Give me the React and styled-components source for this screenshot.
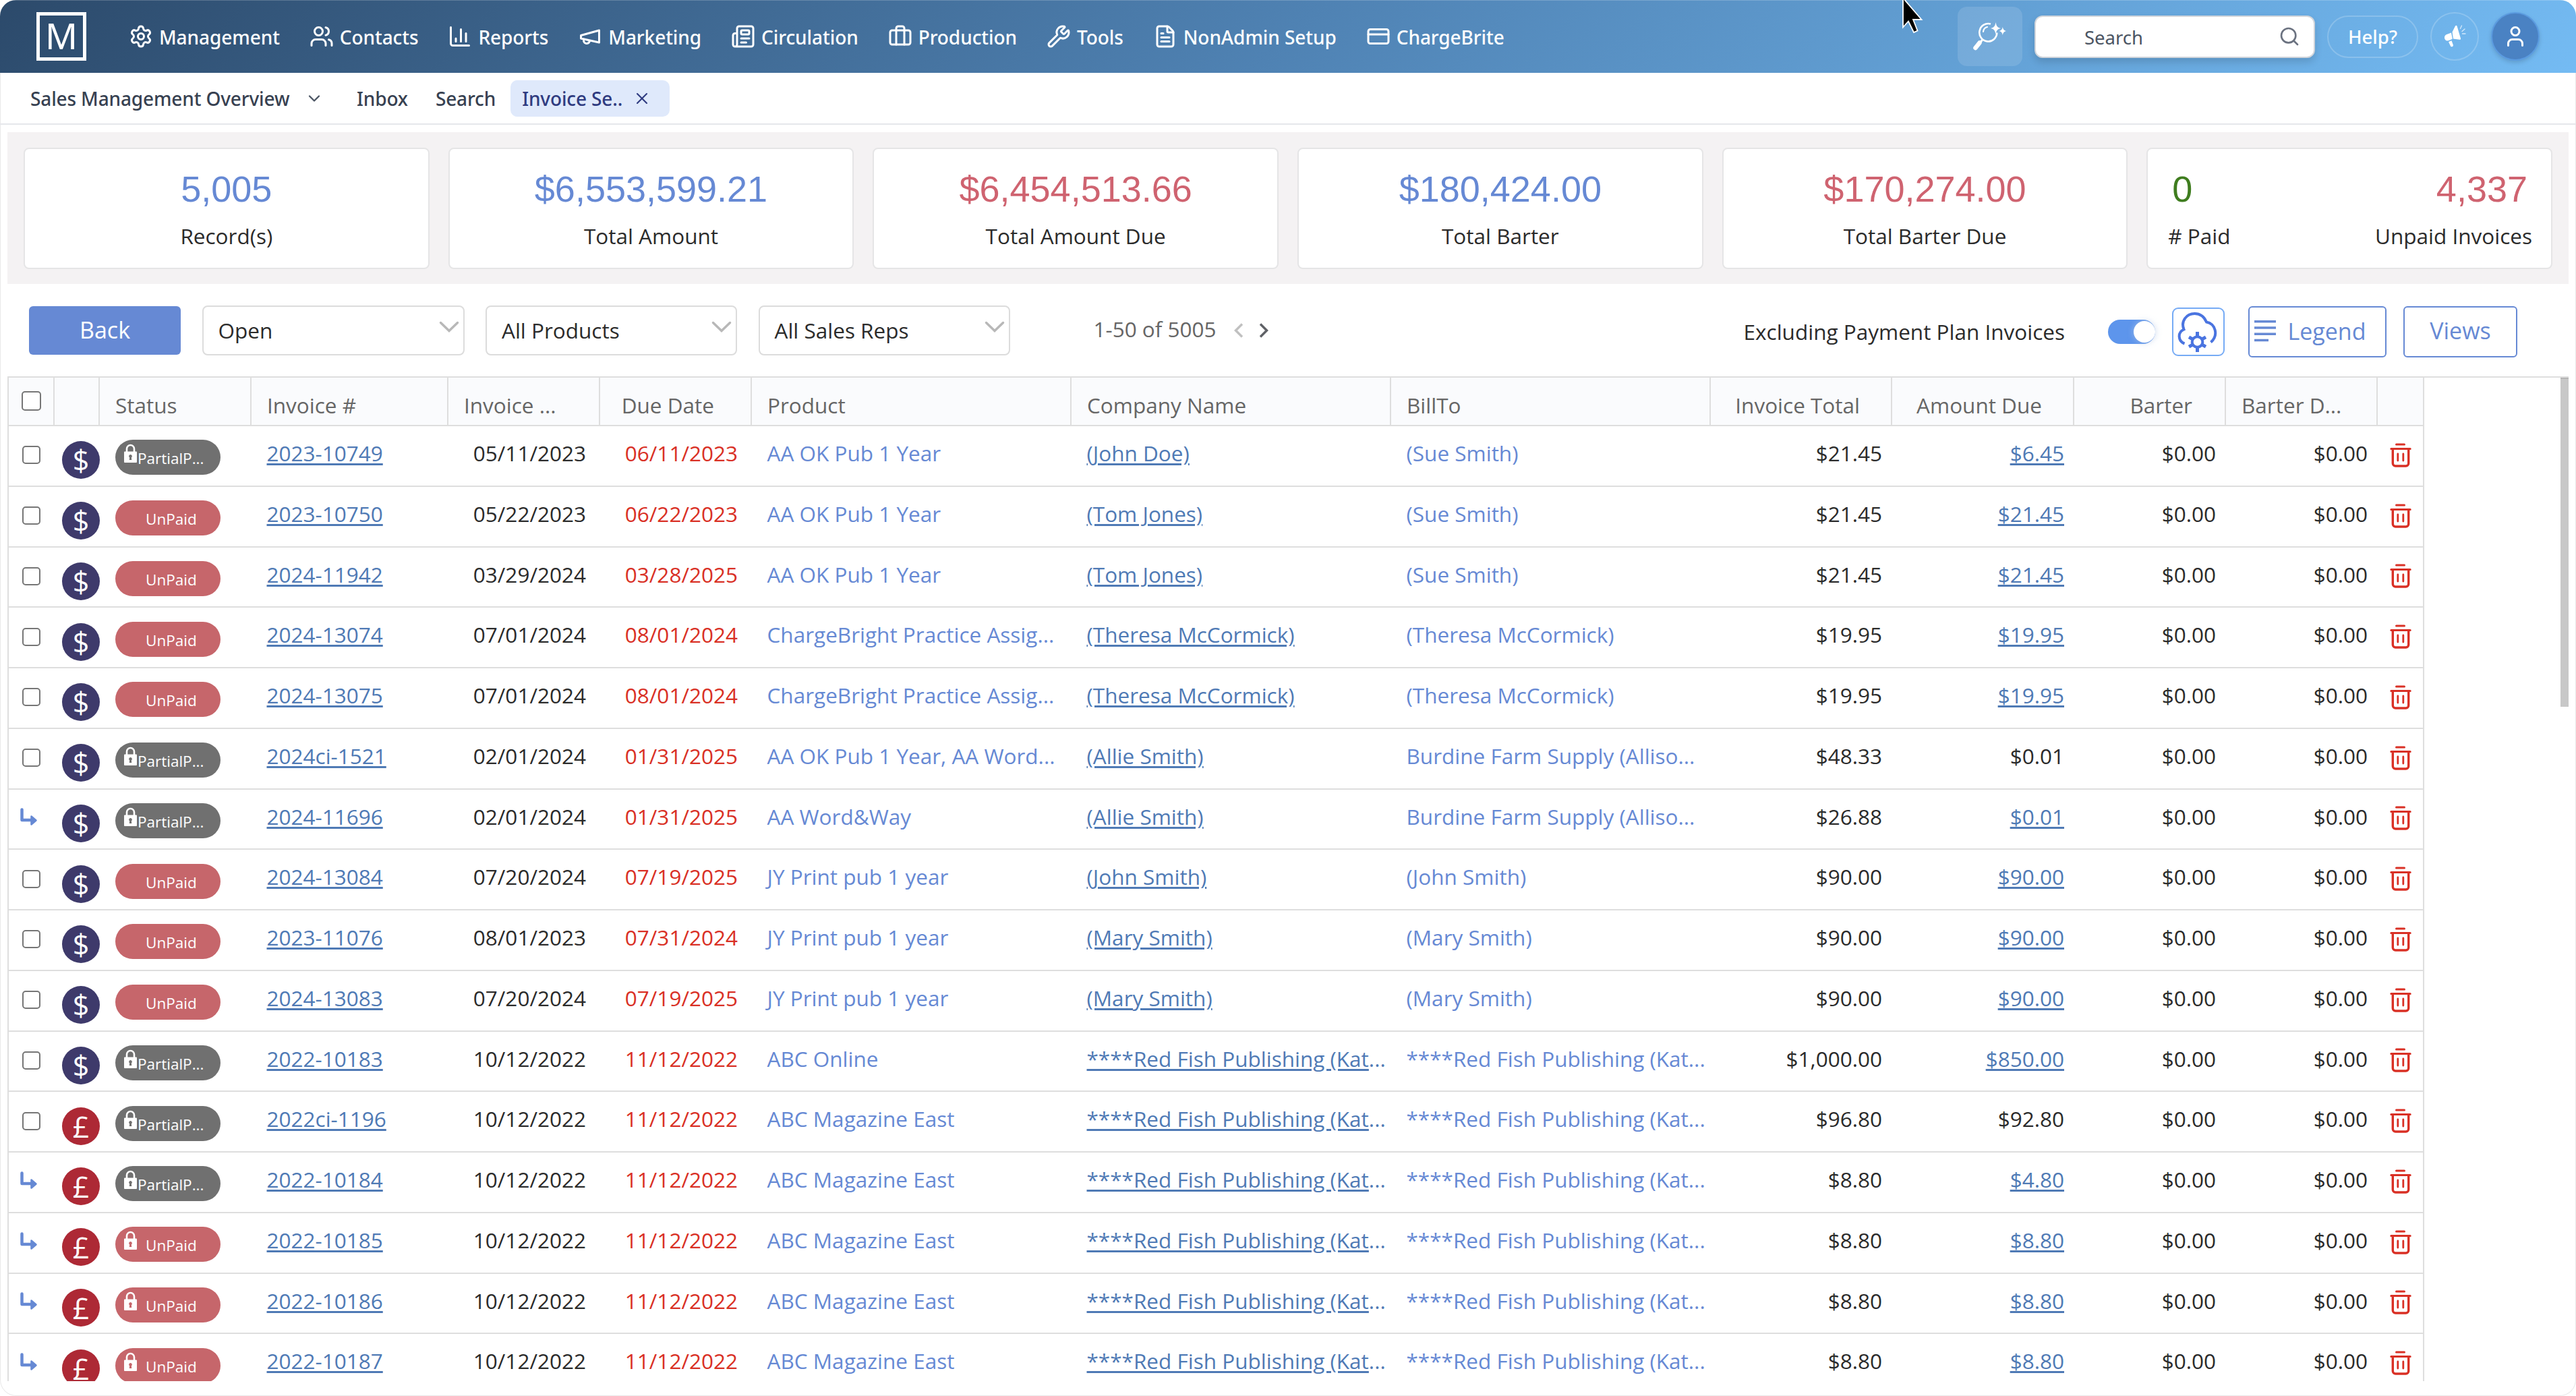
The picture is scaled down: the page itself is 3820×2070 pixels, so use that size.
import React from 'react';
import styled, { createGlobalStyle } from 'styled-components';
import {
  Settings,
  Users,
  ChartColumn,
  Newspaper,
  Briefcase,
  Wrench,
  FileText,
  CreditCard,
  Search,
  User,
  ChevronDown,
  X,
} from 'lucide-react';

const BLUE = '#6689d4';
const RED = '#cf6370';

const MegaphoneIcon = () => (
  <svg width="36" height="36" viewBox="0 0 24 24" fill="none" stroke="currentColor" strokeWidth="2" strokeLinecap="round" strokeLinejoin="round">
    <path d="m3 11 18-5v12L3 14v-3z" />
    <path d="M11.6 16.8a3 3 0 1 1-5.8-1.6" />
  </svg>
);

const navItems = [
  { label: 'Management', icon: <Settings size={36} /> },
  { label: 'Contacts', icon: <Users size={36} /> },
  { label: 'Reports', icon: <ChartColumn size={36} /> },
  { label: 'Marketing', icon: <MegaphoneIcon /> },
  { label: 'Circulation', icon: <Newspaper size={36} /> },
  { label: 'Production', icon: <Briefcase size={36} /> },
  { label: 'Tools', icon: <Wrench size={36} /> },
  { label: 'NonAdmin Setup', icon: <FileText size={36} /> },
  { label: 'ChargeBrite', icon: <CreditCard size={36} /> },
];

const totals = [
  { value: '5,005', label: 'Record(s)', color: BLUE },
  { value: '$6,553,599.21', label: 'Total Amount', color: BLUE },
  { value: '$6,454,513.66', label: 'Total Amount Due', color: RED },
  { value: '$180,424.00', label: 'Total Barter', color: BLUE },
  { value: '$170,274.00', label: 'Total Barter Due', color: RED },
];

const RED_FISH = '****Red Fish Publishing (Kat...';

const invoices = [
  { cur: '$', status: 'PartialP...', lock: true, no: '2023-10749', date: '05/11/2023', due: '06/11/2023', product: 'AA OK Pub 1 Year', company: '(John Doe)', billTo: '(Sue Smith)', total: '$21.45', amount: '$6.45' },
  { cur: '$', status: 'UnPaid', no: '2023-10750', date: '05/22/2023', due: '06/22/2023', product: 'AA OK Pub 1 Year', company: '(Tom Jones)', billTo: '(Sue Smith)', total: '$21.45', amount: '$21.45' },
  { cur: '$', status: 'UnPaid', no: '2024-11942', date: '03/29/2024', due: '03/28/2025', product: 'AA OK Pub 1 Year', company: '(Tom Jones)', billTo: '(Sue Smith)', total: '$21.45', amount: '$21.45' },
  { cur: '$', status: 'UnPaid', no: '2024-13074', date: '07/01/2024', due: '08/01/2024', product: 'ChargeBright Practice Assig...', company: '(Theresa McCormick)', billTo: '(Theresa McCormick)', total: '$19.95', amount: '$19.95' },
  { cur: '$', status: 'UnPaid', no: '2024-13075', date: '07/01/2024', due: '08/01/2024', product: 'ChargeBright Practice Assig...', company: '(Theresa McCormick)', billTo: '(Theresa McCormick)', total: '$19.95', amount: '$19.95' },
  { cur: '$', status: 'PartialP...', lock: true, no: '2024ci-1521', date: '02/01/2024', due: '01/31/2025', product: 'AA OK Pub 1 Year, AA Word...', company: '(Allie Smith)', billTo: 'Burdine Farm Supply (Alliso...', total: '$48.33', amount: '$0.01', combined: true },
  { child: true, cur: '$', status: 'PartialP...', lock: true, no: '2024-11696', date: '02/01/2024', due: '01/31/2025', product: 'AA Word&Way', company: '(Allie Smith)', billTo: 'Burdine Farm Supply (Alliso...', total: '$26.88', amount: '$0.01' },
  { cur: '$', status: 'UnPaid', no: '2024-13084', date: '07/20/2024', due: '07/19/2025', product: 'JY Print pub 1 year', company: '(John Smith)', billTo: '(John Smith)', total: '$90.00', amount: '$90.00' },
  { cur: '$', status: 'UnPaid', no: '2023-11076', date: '08/01/2023', due: '07/31/2024', product: 'JY Print pub 1 year', company: '(Mary Smith)', billTo: '(Mary Smith)', total: '$90.00', amount: '$90.00' },
  { cur: '$', status: 'UnPaid', no: '2024-13083', date: '07/20/2024', due: '07/19/2025', product: 'JY Print pub 1 year', company: '(Mary Smith)', billTo: '(Mary Smith)', total: '$90.00', amount: '$90.00' },
  { cur: '$', status: 'PartialP...', lock: true, no: '2022-10183', date: '10/12/2022', due: '11/12/2022', product: 'ABC Online', company: RED_FISH, billTo: RED_FISH, total: '$1,000.00', amount: '$850.00' },
  { cur: '£', status: 'PartialP...', lock: true, no: '2022ci-1196', date: '10/12/2022', due: '11/12/2022', product: 'ABC Magazine East', company: RED_FISH, billTo: RED_FISH, total: '$96.80', amount: '$92.80', combined: true },
  { child: true, cur: '£', status: 'PartialP...', lock: true, no: '2022-10184', date: '10/12/2022', due: '11/12/2022', product: 'ABC Magazine East', company: RED_FISH, billTo: RED_FISH, total: '$8.80', amount: '$4.80' },
  { child: true, cur: '£', status: 'UnPaid', lock: true, no: '2022-10185', date: '10/12/2022', due: '11/12/2022', product: 'ABC Magazine East', company: RED_FISH, billTo: RED_FISH, total: '$8.80', amount: '$8.80' },
  { child: true, cur: '£', status: 'UnPaid', lock: true, no: '2022-10186', date: '10/12/2022', due: '11/12/2022', product: 'ABC Magazine East', company: RED_FISH, billTo: RED_FISH, total: '$8.80', amount: '$8.80' },
  { child: true, cur: '£', status: 'UnPaid', lock: true, no: '2022-10187', date: '10/12/2022', due: '11/12/2022', product: 'ABC Magazine East', company: RED_FISH, billTo: RED_FISH, total: '$8.80', amount: '$8.80' },
];

const SparkSearchIcon = () => (
  <svg width="52" height="42" viewBox="0 0 52 42" fill="none" stroke="#fff">
    <path d="M27 2.6A13 13.200 0 1 0 36.300 15.500" strokeWidth="2.600" />
    <path d="M16 14a8 8 0 0 1 6-7" strokeWidth="2.2" strokeLinecap="round" />
    <path d="M15 25.500 12 29.500" strokeWidth="3" />
    <path d="M10.5 30.500 4.500 38" strokeWidth="6.500" strokeLinecap="round" />
    <path d="M34.500 0c1 5.800 2.700 8 7.500 9-4.800 1-6.500 3.200-7.500 9-1-5.800-2.700-8-7.500-9 4.800-1 6.500-3.200 7.500-9z" fill="#fff" stroke="none" />
    <path d="M44.800 7c.8 3.700 2 5.200 5.500 6-3.500.8-4.700 2.300-5.500 6-.8-3.700-2-5.200-5.500-6 3.500-.8 4.700-2.300 5.500-6z" fill="#fff" stroke="none" />
  </svg>
);

const BullhornIcon = () => (
  <svg width="34" height="34" viewBox="0 0 34 34" fill="#fff">
    <path d="M13.500 10.500 18 1.500c.8-1.300 2.200-.9 2.600.2L26 20c.3 1.200-.6 2-1.800 1.700L15 20.500z" />
    <path d="M12 11.500 13.800 20.700 8.500 23C5 24.300 2.500 22.500 2 19.500c-.4-3 1.300-4.900 4-5.800z" />
    <path d="m8 25 4.500-1.800 2.300 6.300c.4 1.600-.4 2.500-1.500 2.700-1.300.3-2.200-.4-2.600-1.500z" />
    <path d="M25.500 5.500 27.500 1M28 9.500l4-3.500M28.500 13H33" stroke="#d5e9fb" strokeWidth="1.300" strokeLinecap="round" />
  </svg>
);

const CloudGearIcon = () => (
  <svg width="60" height="60" viewBox="0 0 60 60" fill="none" stroke="#4a74e0" strokeWidth="4">
    <path d="M11.500 47.500C2 44 .5 31 10.500 26.500 5.500 14 14.500 3 26.500 3c8 0 14 4.500 17.500 12.500C57 17.500 62.500 35 50.500 45.500" />
    <circle cx="30.500" cy="45" r="7.800" />
    <path d="M30.500 38v-8M30.500 52v8M24.500 41.500l-6.500-3.700M36.500 48.500l6.500 3.700M24.500 48.500 18 52.200M36.500 41.500l6.500-3.700" strokeWidth="5" />
  </svg>
);

const TrashIcon = () => (
  <svg width="32" height="36" viewBox="0 0 32 36" fill="none" stroke="#d93025" strokeWidth="3" strokeLinecap="round">
    <path d="M9.500 2h12M1.800 8.500h28.400" />
    <path d="M4.300 9v21a4 4 0 0 0 4 4h15.400a4 4 0 0 0 4-4V9" strokeWidth="3.400" />
    <path d="M11.800 16v10M19.800 16v10" strokeWidth="2.800" />
  </svg>
);

const ChildArrow = () => (
  <svg width="26" height="27" viewBox="0 0 26 27" fill="none" stroke={BLUE} strokeWidth="4.500" strokeLinecap="round" strokeLinejoin="round">
    <path d="M2.500 2.500v15.500h18" />
    <path d="m16.500 12.500 7 6-7 6z" fill={BLUE} strokeWidth="2.500" />
  </svg>
);

const PadlockIcon = () => (
  <svg width="19" height="28" viewBox="0 0 19 28" fill="none">
    <path d="M4 13V7.500a5.500 5.500 0 0 1 11 0V13" stroke="#fff" strokeWidth="2.600" />
    <path fill="#fff" fillRule="evenodd" d="M1 11.500h17a1 1 0 0 1 1 1V27a1 1 0 0 1-1 1H1a1 1 0 0 1-1-1V12.500a1 1 0 0 1 1-1zM9.500 16a2.400 2.400 0 0 0-1.300 4.400L7.700 24h3.600l-.5-3.600A2.400 2.400 0 0 0 9.500 16z" />
  </svg>
);

const CompanyName = ({ name }) => {
  const cut = name.endsWith('...');
  return (
    <>
      <Link>{cut ? name.slice(0, -3) : name}</Link>
      {cut && <LinkDots>...</LinkDots>}
    </>
  );
};

const InvoiceRow = ({ item }) => (
  <Row>
    <Cell $center={!item.child} $pad={item.child ? '0 0 5px 17px' : undefined}>
      {item.child ? <ChildArrow /> : <CheckBox />}
    </Cell>
    <Cell $pad="0 0 0 11px">
      <Currency $pound={item.cur === '£'}>{item.cur}</Currency>
    </Cell>
    <Cell $pad="5px 0 0 23px">
      <Pill $unpaid={item.status === 'UnPaid'}>
        <LockSlot>{item.lock && <PadlockIcon />}</LockSlot>
        <PillText $unpaid={item.status === 'UnPaid'}>{item.status}</PillText>
      </Pill>
    </Cell>
    <TextCell>
      <Link>{item.no}</Link>
    </TextCell>
    <TextCell $right $end={21}>{item.date}</TextCell>
    <TextCell $right $end={21} $color="#d93025">{item.due}</TextCell>
    <TextCell $color={BLUE}>{item.product}</TextCell>
    <TextCell><CompanyName name={item.company} /></TextCell>
    <TextCell $color={BLUE}>{item.billTo}</TextCell>
    <TextCell $right $end={15}>{item.total}</TextCell>
    <TextCell $right $end={15}>{item.combined ? item.amount : <Link>{item.amount}</Link>}</TextCell>
    <TextCell $right $end={15}>$0.00</TextCell>
    <TextCell $right $end={15}>$0.00</TextCell>
    <Cell $pad="0 0 2px 18px">
      <TrashIcon />
    </Cell>
  </Row>
);

const App = () => (
  <>
    <GlobalStyle />
    <Window>
      <NavBar>
        <Logo>M</Logo>
        <NavList>
          {navItems.map(item => (
            <NavItem key={item.label}>
              {item.icon}
              <span>{item.label}</span>
            </NavItem>
          ))}
        </NavList>
        <NavTools>
          <SparkButton><SparkSearchIcon /></SparkButton>
          <SearchBox>
            <span>Search</span>
            <Search size={32} color="#6b7280" />
          </SearchBox>
          <HelpButton>Help?</HelpButton>
          <RoundButton><BullhornIcon /></RoundButton>
          <RoundButton $filled><User size={36} /></RoundButton>
        </NavTools>
      </NavBar>

      <TabBar>
        <OverviewTab>
          Sales Management Overview
          <ChevronDown size={28} color="#4b5563" />
        </OverviewTab>
        <Tab $gap={41}>Inbox</Tab>
        <Tab $gap={22}>Search</Tab>
        <ActiveTab>
          Invoice Se..
          <X size={28} strokeWidth={1.8} />
        </ActiveTab>
      </TabBar>

      <Summary>
        {totals.map(t => (
          <Card key={t.label}>
            <CardValue $color={t.color}>{t.value}</CardValue>
            <CardLabel>{t.label}</CardLabel>
          </Card>
        ))}
        <SplitCard>
          <div>
            <CardValue $color="#3f7d1f" $pad="0 0 0 6px">0</CardValue>
            <CardLabel># Paid</CardLabel>
          </div>
          <SplitEnd>
            <CardValue $color={RED} $pad="0 7px 0 0">4,337</CardValue>
            <CardLabel>Unpaid Invoices</CardLabel>
          </SplitEnd>
        </SplitCard>
      </Summary>

      <Toolbar>
        <BackButton>Back</BackButton>
        {[['Open', 389], ['All Products', 373], ['All Sales Reps', 373]].map(([text, width]) => (
          <Select key={text} $width={width}>
            {text}
            <svg width="30" height="18" viewBox="0 0 30 18" fill="none" stroke="#b8b8b8" strokeWidth="3.500" strokeLinecap="round">
              <path d="m2.500 2.500 12.500 12 12.500-12" />
            </svg>
          </Select>
        ))}
        <Pager>
          1-50 of 5005
          <svg width="52" height="22" viewBox="0 0 52 22" fill="none" strokeWidth="3.500">
            <path d="M13 1.500 3.500 11l9.500 9.500" stroke="#c0c0c0" />
            <path d="m40 1.500 9.500 9.500L40 20.500" stroke="#5f6166" />
          </svg>
        </Pager>
        <ToolbarEnd>
          <span>Excluding Payment Plan Invoices</span>
          <Toggle><Knob /></Toggle>
          <CloudButton><CloudGearIcon /></CloudButton>
          <OutlineButton $width={205} $pad="0 21px 2px 0">
            <svg width="32" height="32" viewBox="0 0 32 32" fill={BLUE}>
              <path d="M0 0h32v3.500H0zM0 9.300h32v3.500H0zM0 18.500h32V22H0zM0 27.700h21v3.500H0z" />
            </svg>
            Legend
          </OutlineButton>
          <OutlineButton $width={169} $pad="0 0 3px">Views</OutlineButton>
        </ToolbarEnd>
      </Toolbar>

      <GridArea>
        <Table>
          <HeadRow>
            <HeadCell $center><CheckBox $large /></HeadCell>
            <HeadCell />
            <HeadCell>Status</HeadCell>
            <HeadCell>Invoice #</HeadCell>
            <HeadCell>Invoice ...</HeadCell>
            <HeadCell $end={54}>Due Date</HeadCell>
            <HeadCell>Product</HeadCell>
            <HeadCell>Company Name</HeadCell>
            <HeadCell>BillTo</HeadCell>
            <HeadCell $end={46}>Invoice Total</HeadCell>
            <HeadCell $end={46}>Amount Due</HeadCell>
            <HeadCell $end={48}>Barter</HeadCell>
            <HeadCell>Barter D...</HeadCell>
            <HeadCell />
          </HeadRow>
          {invoices.map(item => (
            <InvoiceRow key={item.no} item={item} />
          ))}
        </Table>
        <ScrollThumb />
      </GridArea>

      <Cursor width="34" height="52" viewBox="0 0 34 52">
        <path d="M2-3v43.500l8-9 8 16.500 5.500-2.500-6.500-16.500H29.500z" fill="#000" stroke="#fff" strokeWidth="1.800" />
      </Cursor>
    </Window>
  </>
);

const GlobalStyle = createGlobalStyle`
  * {
    box-sizing: border-box;
  }
  body {
    margin: 0;
    background: #fff;
    font-family: 'Open Sans', 'Noto Sans', sans-serif;
    color: #2b2b2b;
    overflow: hidden;
  }
  svg {
    display: block;
    flex-shrink: 0;
  }
`;

const Window = styled.div`
  position: relative;
  display: flex;
  flex-direction: column;
  width: 3820px;
  height: 2070px;
  padding-bottom: 22px;
  border-radius: 24px;
  overflow: hidden;
  background: #fff;
  box-shadow: inset 0 0 0 1px #e9e9e9;
`;

const NavBar = styled.header`
  display: flex;
  align-items: center;
  flex-shrink: 0;
  height: 108px;
  padding: 0 54px;
  color: #fff;
  font-family: 'Noto Sans', sans-serif;
  background: linear-gradient(135deg, #2c4a6b 0%, #4f82b3 50%, #74bbf3 100%);
  box-shadow: inset 0 1px 0 rgba(255, 255, 255, 0.2);
`;
const Logo = styled.div`
  width: 74px;
  height: 72px;
  border: 5px solid #fff;
  font-size: 53px;
  line-height: 60px;
  text-align: center;
`;
const NavList = styled.nav`
  display: flex;
  align-items: center;
  gap: 44px;
  margin-left: 63px;
`;
const NavItem = styled.div`
  display: flex;
  align-items: center;
  gap: 9px;
  font-size: 28px;
  font-weight: 500;
  letter-spacing: -0.08px;
  white-space: nowrap;
  span {
    padding-top: 2px;
  }
`;
const NavTools = styled.div`
  display: flex;
  align-items: center;
  gap: 18px;
  margin-left: auto;
`;
const SparkButton = styled.div`
  display: flex;
  align-items: center;
  justify-content: center;
  width: 96px;
  height: 88px;
  border-radius: 14px;
  background: rgba(255, 255, 255, 0.12);
`;
const SearchBox = styled.div`
  display: flex;
  align-items: center;
  justify-content: space-between;
  width: 416px;
  height: 63px;
  padding: 0 20px 0 72px;
  border: 2px solid #d1d5db;
  border-radius: 12px;
  background: #fff;
  color: #4b5563;
  font-size: 27.5px;
  box-shadow: 0 6px 12px rgba(0, 0, 0, 0.14);
  span {
    padding-top: 3px;
  }
`;
const HelpButton = styled.div`
  width: 135px;
  height: 63px;
  border: 2px solid rgba(255, 255, 255, 0.2);
  border-radius: 32px;
  font-size: 27.5px;
  font-weight: 500;
  line-height: 59px;
  text-align: center;
`;
const RoundButton = styled.div`
  display: flex;
  align-items: center;
  justify-content: center;
  width: 72px;
  height: 72px;
  border: 2px solid ${({ $filled }) => ($filled ? '#5b9be0' : 'rgba(255, 255, 255, 0.2)')};
  border-radius: 50%;
  background: ${({ $filled }) => ($filled ? '#4a82c3' : 'transparent')};
  box-shadow: ${({ $filled }) => ($filled ? '0 3px 6px rgba(0, 0, 0, 0.15)' : 'none')};
`;

const TabBar = styled.div`
  display: flex;
  align-items: center;
  flex-shrink: 0;
  height: 77px;
  padding: 0 0 0 45px;
  border-bottom: 2px solid #e5e7eb;
  color: #374151;
  font-family: 'Noto Sans', sans-serif;
  font-size: 28px;
  font-weight: 500;
  letter-spacing: -0.14px;
  white-space: nowrap;
`;
const OverviewTab = styled.div`
  display: flex;
  align-items: center;
  justify-content: space-between;
  width: 435px;
`;
const Tab = styled.div`
  margin: 0 ${({ $gap }) => $gap}px 0 0;
  &:nth-child(2) {
    margin-left: 49px;
  }
`;
const ActiveTab = styled.div`
  display: flex;
  align-items: center;
  justify-content: space-between;
  width: 236px;
  height: 54px;
  padding: 0 27px 0 17px;
  border-radius: 10px;
  background: #dfe9fb;
  color: #2f3b80;
`;

const Summary = styled.section`
  display: grid;
  grid-template-columns: repeat(6, 1fr);
  gap: 28px;
  flex-shrink: 0;
  height: 225px;
  margin: 11px 11px 0;
  padding: 23px 24px 22px;
  background: #f4f2f3;
`;
const Card = styled.div`
  padding-top: 28px;
  border: 2px solid #e5e5e6;
  border-radius: 8px;
  background: #fff;
  text-align: center;
`;
const SplitCard = styled(Card)`
  display: flex;
  justify-content: space-between;
  padding-left: 30px;
  padding-right: 28px;
  text-align: left;
`;
const SplitEnd = styled.div`
  text-align: right;
`;
const CardValue = styled.div`
  padding: ${({ $pad }) => $pad || 0};
  font-family: 'Liberation Sans', Arial, sans-serif;
  font-size: 54px;
  line-height: 62px;
  color: ${({ $color }) => $color};
`;
const CardLabel = styled.div`
  margin-top: 17px;
  font-size: 31.5px;
  line-height: 44px;
`;

const Toolbar = styled.div`
  display: flex;
  align-items: center;
  flex-shrink: 0;
  height: 137px;
  padding-left: 43px;
  font-size: 32px;
  white-space: nowrap;
`;
const BackButton = styled.div`
  width: 225px;
  height: 72px;
  border-radius: 6px;
  background: ${BLUE};
  color: #fff;
  font-size: 34px;
  line-height: 70px;
  text-align: center;
`;
const Select = styled.div`
  display: flex;
  align-items: center;
  justify-content: space-between;
  width: ${({ $width }) => $width}px;
  height: 74px;
  margin-left: 31.5px;
  padding: 0 6px 0 22px;
  border: 2px solid #dcdcdc;
  border-radius: 8px;
  font-size: 31.5px;
  svg {
    margin-bottom: 9px;
  }
`;
const Pager = styled.div`
  display: flex;
  align-items: center;
  gap: 25px;
  margin-left: 124px;
  padding-bottom: 4px;
  font-size: 31.5px;
  color: #666;
  svg {
    margin-top: 5px;
  }
`;
const ToolbarEnd = styled.div`
  display: flex;
  align-items: center;
  margin-left: auto;
  padding: 4px 87px 0 0;
  font-size: 31.5px;
`;
const Toggle = styled.div`
  display: flex;
  align-items: center;
  justify-content: flex-end;
  width: 70px;
  height: 36px;
  margin: 0 25px 0 64px;
  border-radius: 18px;
  background: #5d95ec;
`;
const Knob = styled.div`
  width: 32px;
  height: 32px;
  border-radius: 50%;
  background: #fff;
  box-shadow: 0 0 10px rgba(180, 200, 230, 0.7);
`;
const CloudButton = styled.div`
  display: flex;
  align-items: center;
  justify-content: center;
  width: 78px;
  height: 72px;
  margin-right: 35px;
  padding-right: 4px;
  border: 2px solid #76abf5;
  border-radius: 9px;
`;
const OutlineButton = styled.div`
  display: flex;
  align-items: center;
  justify-content: center;
  gap: 17px;
  width: ${({ $width }) => $width}px;
  height: 76px;
  padding: ${({ $pad }) => $pad};
  border: 2px solid ${BLUE};
  border-radius: 6px;
  color: ${BLUE};
  font-size: 34px;
  & + & {
    margin-left: 25px;
  }
`;

const GridArea = styled.div`
  display: flex;
  justify-content: space-between;
  height: 1490px;
  margin: 0 11px;
  border-top: 2px solid #dedede;
  overflow: hidden;
`;
const Table = styled.div`
  flex-shrink: 0;
  border: solid #dedede;
  border-width: 0 2px;
`;
const Row = styled.div`
  display: grid;
  grid-template-columns: 68px 67px 225px 292px 225px 225px 474px 474px 474px 269px 270px 225px 225px 67px;
  height: 89.75px;
  border-bottom: 2px solid #dedede;
  font-size: 31.5px;
  white-space: nowrap;
`;
const HeadRow = styled(Row)`
  height: 72px;
  background: #fafbfd;
  color: #666;
`;
const HeadCell = styled.div`
  display: flex;
  align-items: center;
  justify-content: ${({ $end, $center }) => ($center ? 'center' : $end ? 'flex-end' : 'flex-start')};
  padding: ${({ $end, $center }) => ($center ? '0 0 2px 0' : `11px ${$end || 0}px 0 23px`)};
  border-right: 2px solid #dedede;
  &:last-child {
    border-right: 0;
  }
`;
const Cell = styled.div`
  display: flex;
  align-items: center;
  justify-content: ${({ $center }) => ($center ? 'center' : 'flex-start')};
  min-width: 0;
  padding: ${({ $pad }) => $pad || '0 2px 2px 0'};
`;
const TextCell = styled.div`
  min-width: 0;
  padding: 0 ${({ $end }) => $end || 0}px 0 22.5px;
  color: ${({ $color }) => $color || 'inherit'};
  line-height: 80px;
  text-align: ${({ $right }) => ($right ? 'right' : 'left')};
`;
const Link = styled.span`
  color: #4f7ab5;
  text-decoration: underline;
  text-decoration-thickness: 2.5px;
  text-underline-offset: 3px;
`;
const LinkDots = styled.span`
  color: #4f7ab5;
`;
const CheckBox = styled.div`
  width: ${({ $large }) => ($large ? 29 : 27)}px;
  height: ${({ $large }) => ($large ? 29 : 27)}px;
  border: 2px solid #767676;
  border-radius: 5px;
  background: #fff;
`;
const Currency = styled.div`
  flex-shrink: 0;
  width: 56px;
  height: 56px;
  margin-top: 13px;
  border-radius: 50%;
  background: ${({ $pound }) => ($pound ? '#ad2935' : '#3e3a6b')};
  color: #fff;
  font-size: 43px;
  line-height: 58px;
  text-align: center;
`;
const Pill = styled.div`
  display: flex;
  width: 156px;
  height: 52px;
  padding-left: 13px;
  border-radius: 26px;
  background: ${({ $unpaid }) => ($unpaid ? '#c6666b' : '#707070')};
  color: #fff;
`;
const LockSlot = styled.div`
  width: 19px;
  padding-top: 6px;
`;
const PillText = styled.div`
  margin-left: ${({ $unpaid }) => ($unpaid ? 13 : 1)}px;
  font-size: 22.5px;
  line-height: 55px;
`;
const ScrollThumb = styled.div`
  width: 12px;
  height: 488px;
  background: #c8c8c8;
  border-top: 2px solid #b4b4b4;
`;
const Cursor = styled.svg`
  position: absolute;
  top: 0;
  left: 2820px;
`;

export default App;
